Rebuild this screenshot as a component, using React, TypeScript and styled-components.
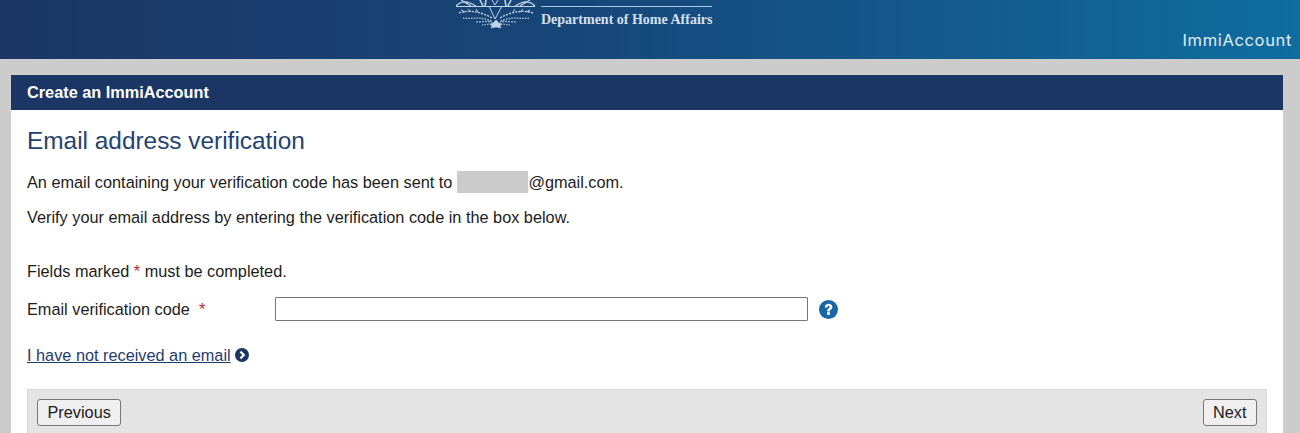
import React from 'react';
import styled, { createGlobalStyle } from 'styled-components';

const GlobalStyle = createGlobalStyle`
  html, body {
    margin: 0;
    padding: 0;
    height: 433px;
    overflow: hidden;
    background: #cccccc;
  }
  body {
    font-family: 'Liberation Sans', Arial, sans-serif;
    font-size: 16.3px;
    color: #1c1c1c;
  }
`;

const Header = styled.header`
  height: 59px;
  box-sizing: border-box;
  background: linear-gradient(90deg, #1b3564 0%, #17477a 45%, #0f6da0 100%);
  display: grid;
  grid-template-columns: 456px auto 1fr;
`;

const Brand = styled.div`
  grid-column: 2;
  display: flex;
  gap: 5px;
`;

const BrandText = styled.div`
  padding-top: 6px;
  display: flex;
  flex-direction: column;
`;

const BrandRule = styled.div`
  width: 171px;
  height: 1px;
  background: #a9c6e2;
`;

const BrandName = styled.div`
  font-family: 'Liberation Serif', 'Times New Roman', serif;
  font-weight: bold;
  font-size: 14px;
  line-height: 16px;
  margin-top: 5px;
  color: #d3e0ee;
  white-space: nowrap;
`;

const AccountName = styled.div`
  grid-column: 3;
  justify-self: end;
  align-self: end;
  margin: 0 8px 10px 0;
  font-family: Inter, 'Open Sans', sans-serif;
  font-size: 16.5px;
  letter-spacing: 0.65px;
  line-height: 18px;
  color: #e2edf5;
`;

const Page = styled.main`
  padding: 16px 17px 0 11px;
`;

const Panel = styled.section`
  background: #ffffff;
`;

const PanelTitle = styled.h1`
  margin: 0;
  height: 35px;
  padding-left: 16px;
  background: #1b3564;
  color: #ffffff;
  font-size: 16.3px;
  font-weight: bold;
  line-height: 35px;
`;

const PanelBody = styled.div`
  padding: 16px 16px 0 16px;
`;

const Heading = styled.h2`
  margin: 0 0 16px;
  font-size: 24.4px;
  font-weight: normal;
  line-height: 30px;
  color: #24426f;
`;

const Line = styled.p<{ $gap: number }>`
  margin: 0 0 ${(p) => p.$gap}px;
  line-height: 20px;
`;

const Masked = styled.span`
  display: inline-block;
  vertical-align: top;
  width: 71px;
  height: 22px;
  margin: -1px 0 0 5px;
  background: #cbcbcb;
`;

const Required = styled.span`
  color: #c0272d;
`;

const FieldRow = styled.div`
  display: flex;
  align-items: center;
  height: 24px;
  margin-bottom: 24px;
`;

const FieldLabel = styled.label`
  width: 248px;
  flex: none;
`;

const CodeInput = styled.input`
  width: 533px;
  height: 24px;
  box-sizing: border-box;
  padding: 0 4px;
  border: 1px solid #767676;
  border-radius: 1px;
  background: #ffffff;
`;

const HelpIcon = styled.svg`
  width: 19px;
  height: 19px;
  margin-left: 11px;
  flex: none;
`;

const LinkRow = styled.div`
  display: flex;
  align-items: center;
  gap: 4px;
  height: 20px;
  margin-bottom: 24px;
`;

const TextLink = styled.a`
  color: #1f3c6c;
  text-decoration: underline;
`;

const Actions = styled.div`
  display: flex;
  justify-content: space-between;
  align-items: flex-start;
  height: 60px;
  box-sizing: border-box;
  padding: 9px 9px;
  background: #e4e4e4;
  border: 1px solid #d8d8d8;
  border-bottom: 0;
`;

const ActionButton = styled.button`
  height: 27px;
  box-sizing: border-box;
  padding: 0 9.5px;
  font: 16.3px 'Liberation Sans', Arial, sans-serif;
  color: #1c1c1c;
  background: #efefef;
  border: 1px solid #767676;
  border-radius: 3px;
`;

const CrestArt = styled.svg`
  flex: none;
  filter: blur(0.35px);
`;

// rough drawing of the crest, top part is cropped by the window
const Crest = () => (
  <CrestArt width="80" height="30" viewBox="0 0 80 30" fill="none" stroke="#c4d4e6" strokeWidth="1">
    <path d="M0 6c4-4 9-5 14-3l6 3M5 0l10 6" strokeWidth="1.300" />
    <path d="M79 6c-4-4-9-5-14-3l-6 3M74 0l-10 6" strokeWidth="1.300" />
    <path d="M0 6.500h79" />
    <path d="M24 0l3 6M30 0l-1 6M49 0l1 6M55 0l-3 6" strokeWidth="1.600" />
    <path d="M33 6l6 13 7-13M36 0l3 5 3-5" />
    <path d="M3 13c6-2 12-2 17-1s11 3 16 6M77 13c-6-2-12-2-17-1s-11 3-16 6" strokeDasharray="2 1.200" strokeWidth="1.400" />
    <path d="M5 10l4 2M12 9l3 3M20 9l2 3M74 10l-4 2M67 9l-3 3M59 9l-2 3" />
    <path d="M7 18c5 1 10 0 15 0s10 2 14 3M73 18c-5 1-10 0-15 0s-10 2-14 3" strokeDasharray="1.500 1.200" strokeWidth="1.200" />
    <path d="M20 22c5 0 11-1 16 0M60 22c-5 0-11-1-16 0" strokeDasharray="2 1" />
    <path d="M26 25c3 0 6-1 8-1M54 25c-3 0-6-1-8-1" strokeDasharray="1.500 1" />
    <path d="M40 20l3 3 3 1-2 2 1 2-5-1-5 1 1-2-2-2 3-1z" fill="#c4d4e6" strokeWidth="0.500" />
  </CrestArt>
);

const ChevronCircle = () => (
  <svg width="14" height="14" viewBox="0 0 14 14">
    <circle cx="7" cy="7" r="7" fill="#1b3564" />
    <path d="M5.400 3.600 8.800 7l-3.400 3.400" fill="none" stroke="#ffffff" strokeWidth="2.200" />
  </svg>
);

export default function App() {
  return (
    <>
      <GlobalStyle />
      <Header>
        <Brand>
          <Crest />
          <BrandText>
            <BrandRule />
            <BrandName>Department of Home Affairs</BrandName>
          </BrandText>
        </Brand>
        <AccountName>ImmiAccount</AccountName>
      </Header>
      <Page>
        <Panel>
          <PanelTitle>Create an ImmiAccount</PanelTitle>
          <PanelBody>
            <Heading>Email address verification</Heading>
            <Line $gap={14}>
              An email containing your verification code has been sent to
              <Masked />
              @gmail.com.
            </Line>
            <Line $gap={34}>Verify your email address by entering the verification code in the box below.</Line>
            <Line $gap={16}>
              Fields marked <Required>*</Required> must be completed.
            </Line>
            <FieldRow>
              <FieldLabel>
                Email verification code&nbsp; <Required>*</Required>
              </FieldLabel>
              <CodeInput />
              <HelpIcon viewBox="0 0 18 18">
                <circle cx="9" cy="9" r="9" fill="#1a64a8" />
                <path
                  d="M5.500 7c0-2.300 1.600-3.500 3.600-3.500 2.100 0 3.600 1.300 3.600 3.200 0 2.500-2.500 2.500-2.500 4.200H7.700c0-3 2.400-3 2.400-4.200 0-.6-.4-1-1-1-.7 0-1.100.5-1.100 1.300z"
                  fill="#ffffff"
                />
                <rect x="7.700" y="11.500" width="2.600" height="2.600" fill="#ffffff" />
              </HelpIcon>
            </FieldRow>
            <LinkRow>
              <TextLink href="#">I have not received an email</TextLink>
              <ChevronCircle />
            </LinkRow>
            <Actions>
              <ActionButton>Previous</ActionButton>
              <ActionButton>Next</ActionButton>
            </Actions>
          </PanelBody>
        </Panel>
      </Page>
    </>
  );
}
